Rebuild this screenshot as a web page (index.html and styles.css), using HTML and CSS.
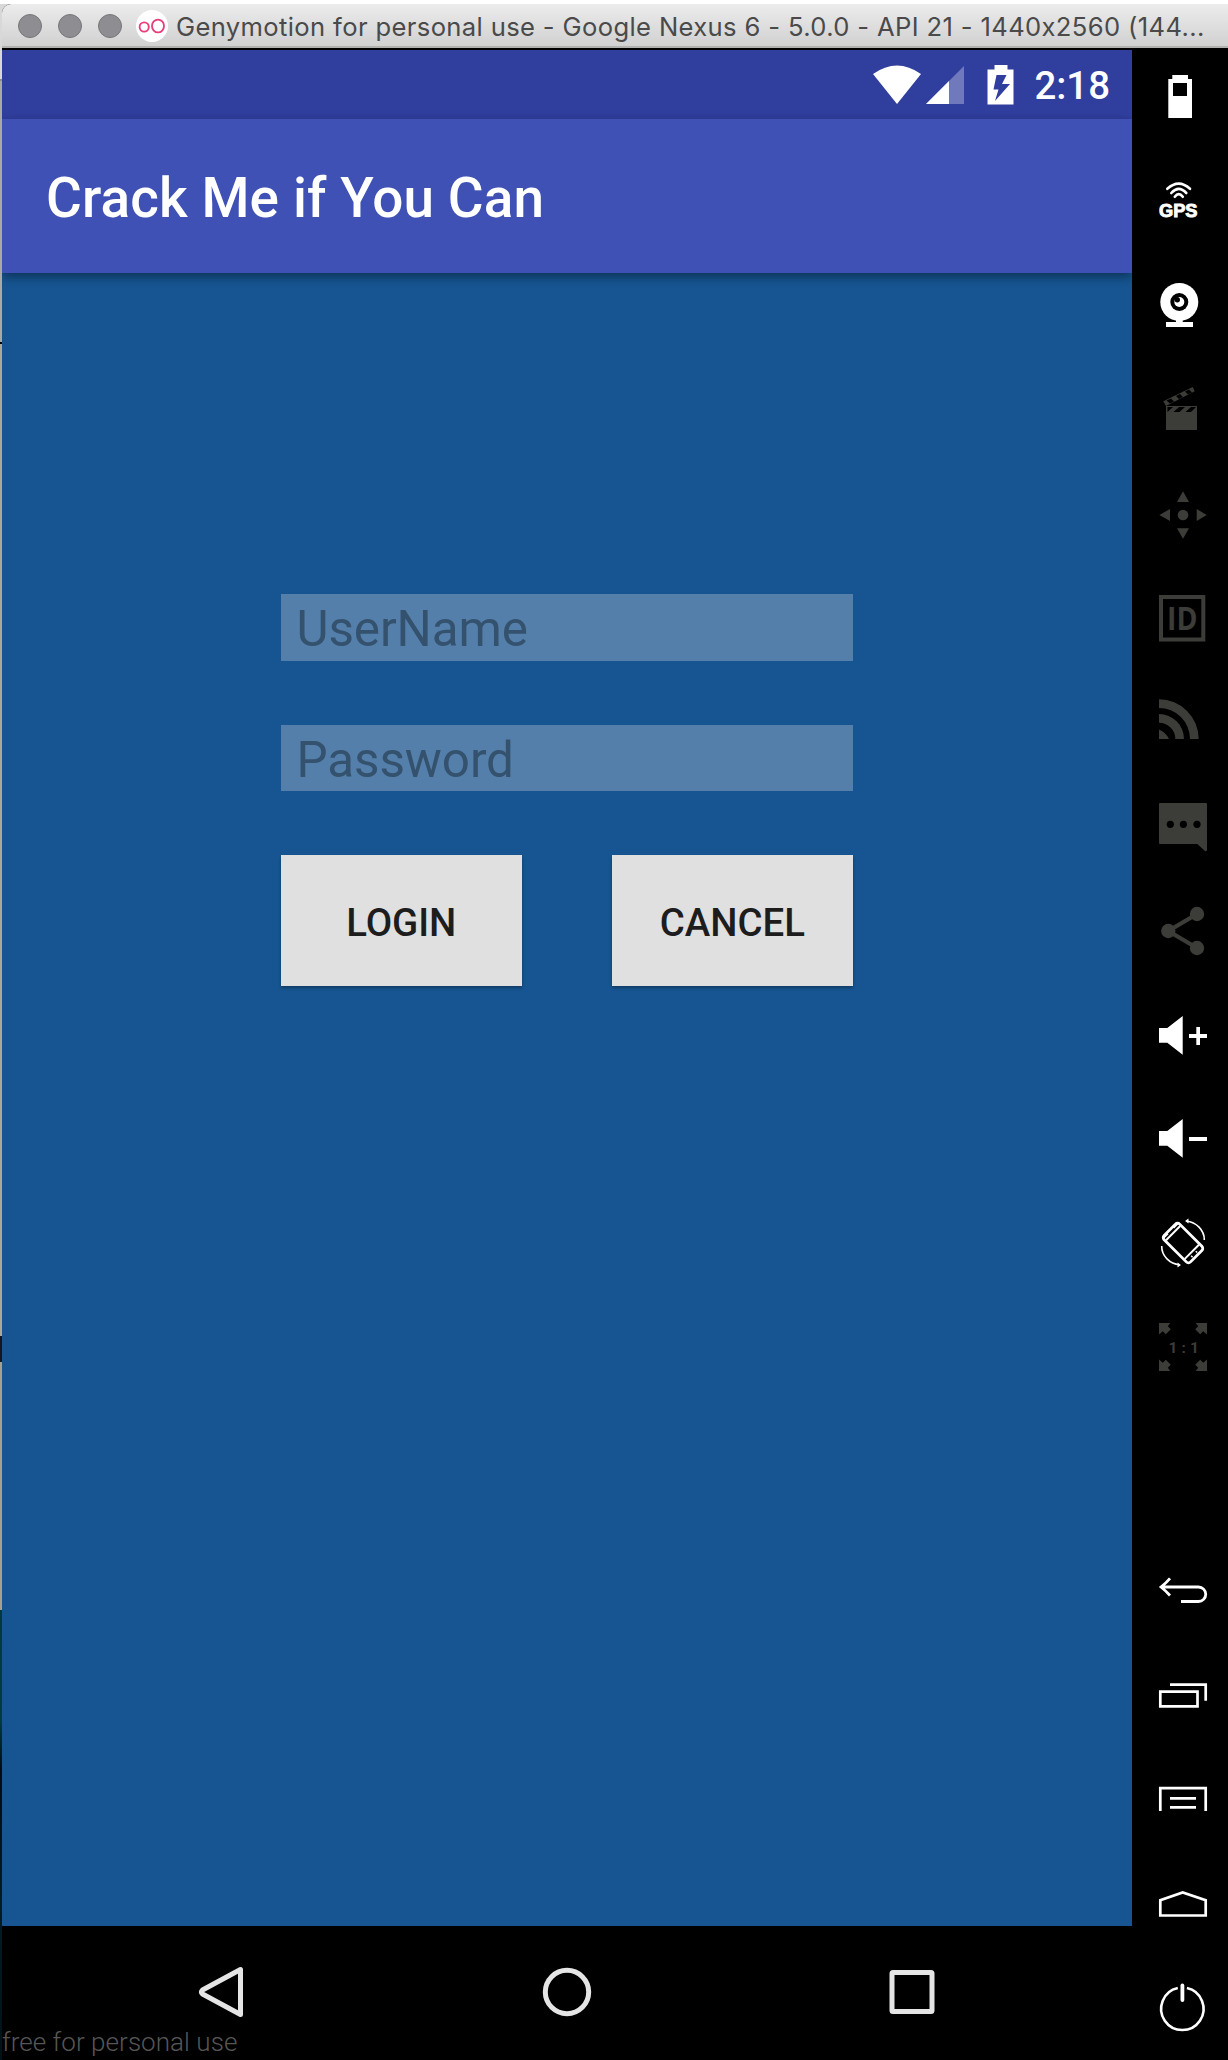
FILE: index.html
```html
<!DOCTYPE html>
<html lang="en">
<head>
<meta charset="utf-8">
<title>Genymotion for personal use</title>
<link rel="stylesheet" href="styles.css">
</head>
<body>
<div class="desktop">
  <div class="window">
    <header class="titlebar">
      <span class="light"></span><span class="light"></span><span class="light"></span>
      <svg class="logo" viewBox="0 0 32 32"><circle cx="16" cy="16" r="16" fill="#fff"/><g fill="none" stroke="#e8407c" stroke-width="1.9"><circle cx="8.2" cy="17" r="4.6"/><ellipse cx="22" cy="16" rx="6" ry="6.4"/></g></svg>
      <span class="caption">Genymotion for personal use - Google Nexus 6 - 5.0.0 - API 21 - 1440x2560 (144...</span>
    </header>
    <div class="main">
      <div class="device">
        <div class="statusbar">
          <svg class="status-icons" viewBox="0 0 146 44">
            <path d="M1 10Q25-7 49 10L25 40Z" fill="#fff"/>
            <path d="M92 2V40H54Z" fill="#7079bc"/><path d="M77 17V40H54Z" fill="#fff"/>
            <path fill="#fff" fill-rule="evenodd" d="M122.500 1h13v4.500h6v35h-26v-35h7zM124.500 11l-3 14.500h5l-3.500 11.500 15-17h-8l4.500-9z"/>
          </svg>
          <span class="clock">2:18</span>
        </div>
        <div class="appbar"><h1>Crack Me if You Can</h1></div>
        <main class="content">
          <form class="form">
            <div class="field"><span>UserName</span></div>
            <div class="field"><span>Password</span></div>
            <div class="actions">
              <button type="button"><span class="login">LOGIN</span></button>
              <button type="button"><span class="cancel">CANCEL</span></button>
            </div>
          </form>
        </main>
        <nav class="navbar">
          <svg viewBox="0 0 50 56"><path d="M43.500 5.500V50.500L5.500 30Q3.500 28 5.500 26Z"/></svg>
          <svg viewBox="0 0 50 56"><circle cx="25" cy="28" r="21.700"/></svg>
          <svg viewBox="0 0 50 56"><rect x="5" y="8.500" width="40" height="39" rx="1"/></svg>
          <span class="watermark">free for personal use</span>
        </nav>
      </div>
      <aside class="tools">
        <svg viewBox="0 0 96 104"><path fill-rule="evenodd" d="M40.300 27H56v4h4v39H36.300V31h4zM41 35v13h14V35z"/></svg>
        <svg viewBox="0 0 96 104"><g class="line" stroke-width="2.600" stroke-linecap="round"><path d="M35.300 36.800Q46.700 26.500 58 36.800"/><path d="M39.300 41Q46.700 32.800 54.300 41"/><path d="M42.800 44.800Q46.700 39.500 50.800 44.800"/></g><text class="gps" x="27" y="64.500" textLength="38.500" lengthAdjust="spacingAndGlyphs">GPS</text></svg>
        <svg viewBox="0 0 96 104"><circle cx="47.300" cy="46" r="19"/><circle cx="47.300" cy="46" r="9" fill="#000"/><circle cx="47.300" cy="46" r="5"/><circle cx="45.300" cy="43.800" r="2.700" fill="#000"/><path d="M44 63h6.700v3H61v5H34v-5h10z"/></svg>
        <svg class="off" viewBox="0 0 96 104"><path d="M34 46h31v24H34zM31.300 41.300L60.700 27l2 4.300L34 46z"/><path fill="#000" d="M35.500 47h5.500l-5.500 5zM47 47h6l-5.500 5h-6zM59 47h5l-5 5h-5.500zM34.500 40.500l4.500-2 3 3-4 2zM44 36l4-2 3 3-4 2zM53 31.500l4-2 3 3-4 2z"/></svg>
        <svg class="off" viewBox="0 0 96 104"><circle cx="51" cy="51" r="5.300"/><path d="M51 27.300L57 38H45zM51 74.700L57 64.300H45zM27.300 51L38 45v12zM74.700 51L64.700 45v12z"/></svg>
        <svg class="off" viewBox="0 0 96 104"><path fill-rule="evenodd" d="M27 27h46.300v46.500H27zM31 31v38.500h38.300V31z"/><text class="id" x="35" y="62" textLength="30.500" lengthAdjust="spacingAndGlyphs">ID</text></svg>
        <svg class="off" viewBox="0 0 96 104"><path d="M27 27.300A39.700 39.700 0 0 1 66.700 67H58A31 31 0 0 0 27 36zM27 42A25 25 0 0 1 52 67h-8.700A16.300 16.300 0 0 0 27 50.700zM27 57.500Q34 60.500 37 67H27z"/></svg>
        <svg class="off" viewBox="0 0 96 104"><path d="M28 27H74q1 0 1 1V74q0 1.500-2 1L65.300 68H28q-1 0-1-1V28q0-1 1-1z"/><g fill="#000"><circle cx="38.300" cy="48.300" r="3.600"/><circle cx="51.400" cy="48.300" r="3.600"/><circle cx="65" cy="48.300" r="3.600"/></g></svg>
        <svg class="off" viewBox="0 0 96 104"><path class="line" stroke-width="4.200" d="M65 34L36.300 51L65 68"/><circle cx="36.300" cy="51" r="7.200"/><circle cx="65" cy="34" r="7.200"/><circle cx="65" cy="68" r="7.200"/></svg>
        <svg viewBox="0 0 96 104"><path d="M27 44h8.300L50.700 32v38.700L35.300 58.700H27zM57 50h7.300v-7H68v7h7v4h-7v7h-3.700v-7H57z"/></svg>
        <svg viewBox="0 0 96 104"><path d="M27 43h8.300L50.700 31v38.700L35.300 57.700H27zM57 49h18v4H57z"/></svg>
        <svg viewBox="0 0 96 104"><g class="line"><g transform="translate(51 51) rotate(-45)"><rect x="-11" y="-18.700" width="22" height="37.400" rx="3" stroke-width="2.800"/><path d="M-10-14H10M-10 12.500H10" stroke-width="2"/><path d="M-10-17.500H-4M4-17.500H10M-4 15.800H-2.500M2.500 15.800H4" stroke-width="2"/></g><path d="M72.300 48C72.500 38 64 30 54.500 29.300M29.700 54C29.500 64 38 72 47.500 72.700" stroke-width="1.600"/></g><path d="M53 29l3.500-2.500v5zM49 73l-3.500 2.500v-5z"/></svg>
        <svg class="off" viewBox="0 0 96 104"><path d="M27 27h11.300l-2.500 3.300 3 3-5 5-3-3-3.800 3.200zM75 27H63.700l2.500 3.300-3 3 5 5 3-3 3.800 3.200zM27 75h11.300l-2.500-3.300 3-3-5-5-3 3-3.800-3.200zM75 75H63.700l2.500-3.300-3-3 5-5 3 3 3.800-3.200z"/><text class="ratio" x="36.500" y="56.700" textLength="30.500" lengthAdjust="spacing">1:1</text></svg>
        <div class="spring"></div>
        <svg viewBox="0 0 96 104"><path class="line" stroke-width="2.800" d="M38 38.300Q34 43 29 47Q34 51 38 55.500M29 47H66.500A7.250 7.250 0 0 1 66.500 61.500H49"/></svg>
        <svg viewBox="0 0 96 104"><path class="line" stroke-width="2.700" d="M28.300 47.700H65.500V62.400H28.300zM38 40.600H73.700V56.700"/></svg>
        <svg viewBox="0 0 96 104"><path class="line" stroke-width="2.700" d="M28.300 63V40.200H73.700V63M38 50.300H64M38 59.400H64"/></svg>
        <svg viewBox="0 0 96 104"><path class="line" stroke-width="2.700" d="M28.300 63.500V48.300L50.700 40.500L73.700 48.300V63.500z"/></svg>
        <svg viewBox="0 0 96 104"><path class="line" stroke-width="2.600" d="M54.900 32.100A21.200 21.200 0 1 1 45.800 32.100"/><path class="line" stroke-width="3.800" stroke-linecap="round" d="M50.400 29.500V44"/></svg>
      </aside>
    </div>
  </div>
</div>
</body>
</html>
```
FILE: styles.css
```css
* { box-sizing: border-box; }
body { margin: 0; background: #fff; }
svg { display: block; flex: none; }

.desktop {
  width: 1228px;
  height: 2060px;
  padding: 4px 0 0 2px;
  overflow: hidden;
  background:
    linear-gradient(#fff, #fff) 0 0 / 100% 4px no-repeat,
    linear-gradient(#d8d8d8 0 79px, #8e8e8b 79px 81px, #aaa9a2 81px 342px, #000 342px 344px,
      #aca899 344px 1336px, #17161f 1336px 1362px, #a79f90 1362px 1610px,
      #02393f 1610px, #003b42 1720px, #010b12 1770px, #001c24 1900px, #001218 2060px);
}
.window { display: flex; flex-direction: column; height: 2056px; border-radius: 9px 0 0 0; overflow: hidden; background: #000; }

.titlebar {
  display: flex;
  align-items: center;
  height: 44px;
  padding: 1px 0 0 16px;
  background: linear-gradient(#ececec, #d1d1d1);
  border-bottom: 2px solid #b2b2b0;
}
.light { width: 24px; height: 24px; margin-right: 16px; border-radius: 50%; background: #8e8e92; border: 1px solid #77777a; flex: none; }
.logo { width: 32px; height: 32px; margin-left: -2px; }
.caption { padding-top: 2px; margin-left: 8px; font: 25.6px/40px Inter, sans-serif; letter-spacing: 0.36px; color: #4a4a4a; white-space: nowrap; }

.main { display: flex; flex: 1; }
.device { display: flex; flex-direction: column; width: 1130px; padding-top: 2px; font-family: Roboto, sans-serif; }
.statusbar { display: flex; justify-content: flex-end; height: 69px; padding: 14px 22px 0 0; background: #303e9e; }
.status-icons { width: 146px; height: 44px; margin-right: 16px; }
.clock { font-size: 38.4px; line-height: 44px; font-weight: 500; color: #fff; }
.appbar { position: relative; display: flex; align-items: center; height: 154px; padding: 4px 0 0 44px; background: #3f51b5; box-shadow: 0 4px 10px rgba(0, 0, 0, .4); }
.appbar h1 { margin: 0; font-size: 54.9px; line-height: 64px; font-weight: 500; letter-spacing: 0.12px; color: #fff; white-space: nowrap; }

.content { height: 1653px; padding: 321px 279px 0 278.500px; background: #165592; }
.form { display: flex; flex-direction: column; gap: 64px; }
.field { height: 66.500px; padding-left: 16px; background: #547faa; font-size: 49.4px; line-height: 71px; letter-spacing: -0.1px; color: #34526e; }
.actions { display: flex; justify-content: space-between; }
.actions button { width: 241.500px; height: 131px; padding: 5px 0 0; border: 0; background: #e0e0e0; box-shadow: 0 2px 3px rgba(0, 0, 0, .3); font: 500 38.4px/44px Roboto, sans-serif; color: #1d1d1d; }

.navbar { position: relative; display: flex; flex: 1; padding: 38px 195px 0; justify-content: space-between; }
.navbar svg { width: 50px; height: 56px; fill: none; stroke: #e5e5e5; stroke-width: 5; stroke-linejoin: round; }
.watermark { position: absolute; left: 0; bottom: 2px; font-size: 26px; line-height: 32px; font-weight: 300; letter-spacing: 0.05px; color: #565656; }

.tools { display: flex; flex-direction: column; width: 96px; background: #000; color: #fff; }
.tools svg { width: 96px; height: 104px; fill: currentColor; }
.tools .off { color: #3c3c38; }
.tools .line { fill: none; stroke: currentColor; }
.spring { flex: 1; }
.gps { font: 700 17.500px "Liberation Sans", sans-serif; stroke: currentColor; stroke-width: .9px; }
.id { font: 700 31.5px "Open Sans", sans-serif; }
.ratio { font: 700 15.500px Roboto, sans-serif; }
```
